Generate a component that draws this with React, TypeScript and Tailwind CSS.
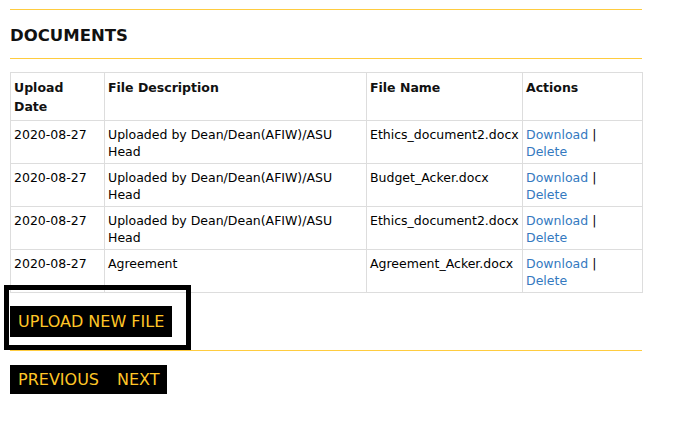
import React from 'react';

type Doc = {
	date: string;
	description: string;
	fileName: string;
};

const documents: Doc[] = [
	{ date: '2020-08-27', description: 'Uploaded by Dean/Dean(AFIW)/ASU Head', fileName: 'Ethics_document2.docx' },
	{ date: '2020-08-27', description: 'Uploaded by Dean/Dean(AFIW)/ASU Head', fileName: 'Budget_Acker.docx' },
	{ date: '2020-08-27', description: 'Uploaded by Dean/Dean(AFIW)/ASU Head', fileName: 'Ethics_document2.docx' },
	{ date: '2020-08-27', description: 'Agreement', fileName: 'Agreement_Acker.docx' },
];

const App = () => {
	return (
		<div className="min-h-[438px] w-[678px] bg-white pt-[9px] font-['DejaVu_Sans',Verdana,sans-serif] text-[12.5px] text-black">
			<div className="ml-[10px] w-[632px]">
				<div className="h-px bg-[#ffcc3f]" />
				<h2 className="pt-[14px] pb-[10px] text-[16.5px] leading-[24px] font-bold text-[#111]">DOCUMENTS</h2>
				<div className="h-px bg-[#ffcc3f]" />

				<table className="mt-[13px] w-[632px] table-fixed border-collapse">
					<colgroup>
						<col className="w-[94px]" />
						<col className="w-[262px]" />
						<col className="w-[156px]" />
						<col className="w-[120px]" />
					</colgroup>
					<thead>
						<tr className="text-left align-top text-[#111]">
							<th className="border border-[#dddddd] px-[3px] pt-[5px] pb-[4px] leading-[19px] font-bold">
								Upload
								<br />
								Date
							</th>
							<th className="border border-[#dddddd] px-[3px] pt-[5px] pb-[4px] leading-[19px] font-bold">File Description</th>
							<th className="border border-[#dddddd] px-[3px] pt-[5px] pb-[4px] leading-[19px] font-bold">File Name</th>
							<th className="border border-[#dddddd] px-[3px] pt-[5px] pb-[4px] leading-[19px] font-bold">Actions</th>
						</tr>
					</thead>
					<tbody>
						{documents.map((doc, i) => (
							<tr key={i} className="align-top">
								<td className="h-[43px] border border-[#dddddd] px-[3px] pt-[5px] pb-[3px] leading-[17px]">{doc.date}</td>
								<td className="border border-[#dddddd] px-[3px] pt-[5px] pb-[3px] leading-[17px]">{doc.description}</td>
								<td className="border border-[#dddddd] px-[3px] pt-[5px] pb-[3px] leading-[17px]">{doc.fileName}</td>
								<td className="border border-[#dddddd] px-[3px] pt-[5px] pb-[3px] leading-[17px]">
									<a href="#" className="text-[#3479bf]">
										Download
									</a>{' '}
									|{' '}
									<a href="#" className="text-[#3479bf]">
										Delete
									</a>
								</td>
							</tr>
						))}
					</tbody>
				</table>

				<div className="relative z-10 -mt-[3px] -ml-[1px] w-[177px] pt-[16px] pb-[8px] pl-[1px] outline-[5px] outline-black outline-solid">
					<button className="bg-black px-[8px] py-[6px] text-[16px] leading-[19px] text-[#ffc627]">UPLOAD NEW FILE</button>
				</div>

				<div className="mt-[5px] h-px bg-[#ffcc3f]" />

				<div className="mt-[14px] flex">
					<button className="bg-black pt-[5px] pr-[9px] pb-[5px] pl-[8px] text-[16px] leading-[19px] text-[#ffc627]">PREVIOUS</button>
					<button className="bg-black pt-[5px] pr-[7px] pb-[5px] pl-[9px] text-[16px] leading-[19px] text-[#ffc627]">NEXT</button>
				</div>
			</div>
		</div>
	);
};

export default App;
